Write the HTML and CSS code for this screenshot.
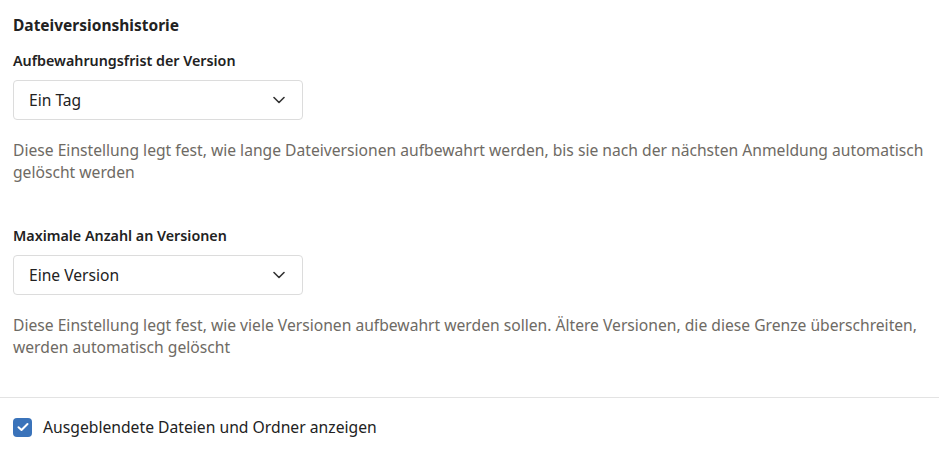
FILE: index.html
```html
<!DOCTYPE html>
<html lang="de">
<head>
  <meta charset="UTF-8">
  <title>Dateiversionshistorie</title>
  <link rel="stylesheet" href="styles.css">
</head>
<body>
  <section class="section">
    <h2 class="section-title">Dateiversionshistorie</h2>

    <div class="field">
      <label class="field-label" for="frist">Aufbewahrungsfrist der Version</label>
      <div class="select">
        <span id="frist">Ein Tag</span>
        <svg class="chevron" width="12" height="8" viewBox="0 0 12 8"><path d="M1 1.5 L6 6.5 L11 1.5" fill="none" stroke="#333" stroke-width="1.6" stroke-linecap="round" stroke-linejoin="round"/></svg>
      </div>
      <p class="hint">Diese Einstellung legt fest, wie lange Dateiversionen aufbewahrt werden, bis sie nach der nächsten Anmeldung automatisch gelöscht werden</p>
    </div>

    <div class="field">
      <label class="field-label" for="anzahl">Maximale Anzahl an Versionen</label>
      <div class="select">
        <span id="anzahl">Eine Version</span>
        <svg class="chevron" width="12" height="8" viewBox="0 0 12 8"><path d="M1 1.5 L6 6.5 L11 1.5" fill="none" stroke="#333" stroke-width="1.6" stroke-linecap="round" stroke-linejoin="round"/></svg>
      </div>
      <p class="hint">Diese Einstellung legt fest, wie viele Versionen aufbewahrt werden sollen. Ältere Versionen, die diese Grenze überschreiten, werden automatisch gelöscht</p>
    </div>
  </section>

  <div class="option">
    <span class="checkbox">
      <svg width="12" height="10" viewBox="0 0 12 10"><path d="M1.5 5.2 L4.5 8 L10.5 2" fill="none" stroke="#fff" stroke-width="2" stroke-linecap="round" stroke-linejoin="round"/></svg>
    </span>
    <span class="option-label">Ausgeblendete Dateien und Ordner anzeigen</span>
  </div>
</body>
</html>
```

FILE: styles.css
```css
* {
  box-sizing: border-box;
}

body {
  margin: 0;
  font-family: 'Noto Sans', 'Open Sans', sans-serif;
  color: #222;
  background: #fff;
}

.section {
  padding: 14px 13px 0;
}

.section-title {
  margin: 0 0 15px;
  font-size: 15.5px;
  font-weight: 700;
  line-height: 22px;
}

.field {
  margin-bottom: 43px;
}

.field:last-child {
  margin-bottom: 39px;
}

.field-label {
  display: block;
  font-size: 14.3px;
  font-weight: 600;
  line-height: 20px;
  margin-bottom: 9px;
}

.select {
  width: 290px;
  height: 40px;
  border: 1px solid #dcdcdc;
  border-radius: 4px;
  display: flex;
  align-items: center;
  justify-content: space-between;
  padding: 0 17px 0 15px;
  font-size: 15.6px;
  color: #222;
}

.hint {
  margin: 19px 0 0;
  font-size: 15.65px;
  line-height: 22px;
  color: #6e6a64;
}

.option {
  border-top: 1px solid #e3e3e3;
  padding: 18px 13px;
  display: flex;
  align-items: center;
  gap: 11px;
}

.checkbox {
  width: 19px;
  height: 19px;
  border-radius: 4px;
  background: #3a73ba;
  display: flex;
  align-items: center;
  justify-content: center;
}

.option-label {
  font-size: 15.7px;
  color: #222;
}
```
